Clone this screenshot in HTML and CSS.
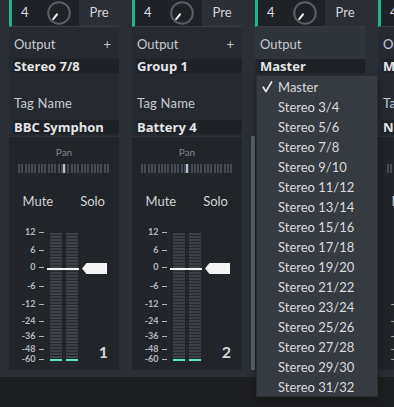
FILE: index.html
```html
<!DOCTYPE html>
<html>
<head>
<meta charset="utf-8">
<link rel="stylesheet" href="styles.css">
</head>
<body>
<div class="app">
  <div class="strips">
    <!-- Strip 1 -->
    <section class="strip">
      <div class="head">
        <div class="head-main"><span class="num">4</span>
          <svg class="knob" viewBox="0 0 24 24"><circle cx="12" cy="12" r="10.8" fill="none" stroke="#5a5e65" stroke-width="2"/><line x1="10" y1="13.3" x2="6.2" y2="18.2" stroke="#f4f4f4" stroke-width="2" stroke-linecap="round"/></svg>
        </div>
        <div class="head-pre"><span>Pre</span></div>
      </div>
      <div class="upper">
        <div class="out-row"><span>Output</span><span class="plus">+</span></div>
        <div class="value">Stereo 7/8</div>
        <div class="tag-row">Tag Name</div>
        <div class="value tag-value">BBC Symphon</div>
      </div>
      <div class="lower">
        <div class="pan-label">Pan</div>
        <div class="pan"></div>
        <div class="ms"><span>Mute</span><span>Solo</span></div>
        <div class="meter">
          <div class="scale">
            <div class="mark" style="top:1px">12</div>
            <div class="mark" style="top:19px">6</div>
            <div class="mark" style="top:36px">0</div>
            <div class="mark" style="top:55px">-6</div>
            <div class="mark" style="top:73px">-12</div>
            <div class="mark" style="top:90px">-24</div>
            <div class="mark" style="top:105px">-36</div>
            <div class="mark" style="top:118px">-48</div>
            <div class="mark" style="top:128px">-60</div>
          </div>
          <div class="bars"><div class="bar"></div><div class="bar"></div></div>
          <div class="chan-no">1</div>
          <div class="fader-line"></div>
          <svg class="fader-cap" viewBox="0 0 25 11"><polygon points="0,5.5 4.5,0 25,0 25,11 4.5,11" fill="#f4f4f4"/></svg>
        </div>
      </div>
    </section>

    <!-- Strip 2 -->
    <section class="strip">
      <div class="head">
        <div class="head-main"><span class="num">4</span>
          <svg class="knob" viewBox="0 0 24 24"><circle cx="12" cy="12" r="10.8" fill="none" stroke="#5a5e65" stroke-width="2"/><line x1="10" y1="13.3" x2="6.2" y2="18.2" stroke="#f4f4f4" stroke-width="2" stroke-linecap="round"/></svg>
        </div>
        <div class="head-pre"><span>Pre</span></div>
      </div>
      <div class="upper">
        <div class="out-row"><span>Output</span><span class="plus">+</span></div>
        <div class="value">Group 1</div>
        <div class="tag-row">Tag Name</div>
        <div class="value tag-value">Battery 4</div>
      </div>
      <div class="lower">
        <div class="pan-label">Pan</div>
        <div class="pan"></div>
        <div class="ms"><span>Mute</span><span>Solo</span></div>
        <div class="meter">
          <div class="scale">
            <div class="mark" style="top:1px">12</div>
            <div class="mark" style="top:19px">6</div>
            <div class="mark" style="top:36px">0</div>
            <div class="mark" style="top:55px">-6</div>
            <div class="mark" style="top:73px">-12</div>
            <div class="mark" style="top:90px">-24</div>
            <div class="mark" style="top:105px">-36</div>
            <div class="mark" style="top:118px">-48</div>
            <div class="mark" style="top:128px">-60</div>
          </div>
          <div class="bars"><div class="bar"></div><div class="bar"></div></div>
          <div class="chan-no">2</div>
          <div class="fader-line"></div>
          <svg class="fader-cap" viewBox="0 0 25 11"><polygon points="0,5.5 4.5,0 25,0 25,11 4.5,11" fill="#f4f4f4"/></svg>
        </div>
      </div>
    </section>

    <!-- Strip 3 (output menu open) -->
    <section class="strip open">
      <div class="head">
        <div class="head-main"><span class="num">4</span>
          <svg class="knob" viewBox="0 0 24 24"><circle cx="12" cy="12" r="10.8" fill="none" stroke="#5a5e65" stroke-width="2"/><line x1="10" y1="13.3" x2="6.2" y2="18.2" stroke="#f4f4f4" stroke-width="2" stroke-linecap="round"/></svg>
        </div>
        <div class="head-pre"><span>Pre</span></div>
      </div>
      <div class="upper">
        <div class="out-row"><span>Output</span></div>
        <div class="value">Master</div>
        <div class="tag-row">Tag Name</div>
        <div class="value tag-value">Kontakt 6</div>
      </div>
      <div class="lower">
        <div class="pan-label">Pan</div>
        <div class="pan"></div>
        <div class="ms"><span>Mute</span><span>Solo</span></div>
        <div class="meter">
          <div class="scale">
            <div class="mark" style="top:1px">12</div>
            <div class="mark" style="top:19px">6</div>
            <div class="mark" style="top:36px">0</div>
            <div class="mark" style="top:55px">-6</div>
            <div class="mark" style="top:73px">-12</div>
            <div class="mark" style="top:90px">-24</div>
            <div class="mark" style="top:105px">-36</div>
            <div class="mark" style="top:118px">-48</div>
            <div class="mark" style="top:128px">-60</div>
          </div>
          <div class="bars"><div class="bar"></div><div class="bar"></div></div>
          <div class="chan-no">3</div>
          <div class="fader-line"></div>
          <svg class="fader-cap" viewBox="0 0 25 11"><polygon points="0,5.5 4.5,0 25,0 25,11 4.5,11" fill="#f4f4f4"/></svg>
        </div>
      </div>
    </section>

    <!-- Strip 4 (partly off-screen) -->
    <section class="strip">
      <div class="head">
        <div class="head-main"><span class="num">4</span>
          <svg class="knob" viewBox="0 0 24 24"><circle cx="12" cy="12" r="10.8" fill="none" stroke="#5a5e65" stroke-width="2"/><line x1="10" y1="13.3" x2="6.2" y2="18.2" stroke="#f4f4f4" stroke-width="2" stroke-linecap="round"/></svg>
        </div>
        <div class="head-pre"><span>Pre</span></div>
      </div>
      <div class="upper">
        <div class="out-row"><span>Output</span><span class="plus">+</span></div>
        <div class="value">Master</div>
        <div class="tag-row">Tag Name</div>
        <div class="value tag-value">Noire</div>
      </div>
      <div class="lower">
        <div class="pan-label">Pan</div>
        <div class="pan"></div>
        <div class="ms"><span>Mute</span><span>Solo</span></div>
        <div class="meter">
          <div class="scale">
            <div class="mark" style="top:1px">12</div>
            <div class="mark" style="top:19px">6</div>
            <div class="mark" style="top:36px">0</div>
            <div class="mark" style="top:55px">-6</div>
            <div class="mark" style="top:73px">-12</div>
            <div class="mark" style="top:90px">-24</div>
            <div class="mark" style="top:105px">-36</div>
            <div class="mark" style="top:118px">-48</div>
            <div class="mark" style="top:128px">-60</div>
          </div>
          <div class="bars"><div class="bar"></div><div class="bar"></div></div>
          <div class="chan-no">4</div>
          <div class="fader-line"></div>
          <svg class="fader-cap" viewBox="0 0 25 11"><polygon points="0,5.5 4.5,0 25,0 25,11 4.5,11" fill="#f4f4f4"/></svg>
        </div>
      </div>
    </section>
  </div>
  <div class="footer"></div>

  <ul class="menu">
    <li class="checked"><svg class="check" viewBox="0 0 20 20"><path d="M6.3 10.2 L8.9 14.6 L14.6 5" fill="none" stroke="#e4e6e9" stroke-width="1.7" stroke-linecap="round" stroke-linejoin="round"/></svg>Master</li>
    <li>Stereo 3/4</li>
    <li>Stereo 5/6</li>
    <li>Stereo 7/8</li>
    <li>Stereo 9/10</li>
    <li>Stereo 11/12</li>
    <li>Stereo 13/14</li>
    <li>Stereo 15/16</li>
    <li>Stereo 17/18</li>
    <li>Stereo 19/20</li>
    <li>Stereo 21/22</li>
    <li>Stereo 23/24</li>
    <li>Stereo 25/26</li>
    <li>Stereo 27/28</li>
    <li>Stereo 29/30</li>
    <li>Stereo 31/32</li>
  </ul>
</div>
</body>
</html>
```

FILE: styles.css
```css
* {
  box-sizing: border-box;
  margin: 0;
  padding: 0;
}

html, body {
  width: 394px;
  height: 407px;
  overflow: hidden;
  background: #2a2e35;
  font-family: Lato, "Liberation Sans", sans-serif;
}

.app {
  position: relative;
  width: 394px;
  height: 407px;
  overflow: hidden;
}

.strips {
  display: flex;
  gap: 13px;
  padding-left: 9px;
  height: 370px;
}

.strip {
  flex: 0 0 110px;
  display: flex;
  flex-direction: column;
}

/* header */
.head {
  display: flex;
  height: 27px;
  border-left: 3px solid #1db58a;
  border-bottom: 1px solid #383c43;
}

.head-main {
  width: 67px;
  background: #1e2126;
  display: flex;
  align-items: center;
  padding-left: 9px;
}

.num {
  font-size: 13px;
  line-height: 14px;
  color: #dcdfe3;
  margin-bottom: 3px;
}

.knob {
  width: 24px;
  height: 24px;
  margin-left: auto;
  margin-right: 8px;
}

.head-pre {
  flex: 1;
  background: #2b2e34;
  display: flex;
  align-items: center;
  justify-content: center;
  font-size: 13px;
  line-height: 14px;
  color: #d3d6da;
}

.head-pre span {
  margin-bottom: 3px;
}

/* upper */
.upper {
  background: #262a30;
  padding-bottom: 2px;
}

.out-row {
  height: 32px;
  padding: 10px 8px 0 5px;
  display: flex;
  justify-content: space-between;
  font-size: 13px;
  line-height: 14px;
  color: #c6cad0;
}

.strip.open .out-row {
  background: #30343b;
}

.plus {
  color: #c3c7cc;
}

.value {
  margin-left: 4px;
  height: 14px;
  padding-left: 1px;
  background: #1e2126;
  font-family: "Open Sans", Lato, sans-serif;
  font-weight: 700;
  font-size: 13px;
  line-height: 14px;
  color: #e3e5e8;
  white-space: nowrap;
}

.tag-row {
  margin-top: 23px;
  padding-left: 5px;
  font-size: 13px;
  line-height: 14px;
  letter-spacing: 0.2px;
  color: #c6cad0;
}

.tag-value {
  margin-top: 10px;
}

/* lower */
.lower {
  flex: 1;
  background: #212429;
  border-top: 1px solid #2f3339;
  padding-top: 9px;
}

.strip.open .lower {
  box-shadow: -4px 0 0 #5a6471;
}

.pan-label {
  font-size: 10px;
  line-height: 12px;
  text-align: center;
  color: #80868e;
}

.pan {
  position: relative;
  margin: 6px 9px 0;
  height: 9px;
  background: repeating-linear-gradient(to right, #464a52 0 2px, transparent 2px 3.3px);
}

.pan::after {
  content: "";
  position: absolute;
  left: 45px;
  top: 0;
  width: 2px;
  height: 9px;
  background: #a7c3df;
}

.ms {
  margin-top: 21px;
  display: flex;
  justify-content: space-between;
  padding: 0 14px 0 13.5px;
  font-size: 13px;
  line-height: 14px;
  color: #d1d4d8;
}

.meter {
  position: relative;
  margin-top: 18px;
  height: 140px;
  display: flex;
}

.scale {
  position: relative;
  width: 35px;
  flex: none;
}

.mark {
  position: absolute;
  right: 0;
  display: flex;
  align-items: center;
  gap: 3.5px;
  height: 10px;
  font-weight: 700;
  font-size: 9px;
  line-height: 10px;
  color: #b4b9c0;
}

.mark::after {
  content: "";
  width: 5px;
  height: 1px;
  background: #b4b9c0;
}

.bars {
  display: flex;
  gap: 4px;
  margin-left: 6px;
  padding-top: 7px;
}

.bar {
  width: 12px;
  height: 129px;
  background:
    linear-gradient(#5fe3c0, #5fe3c0) 0 126px / 100% 2px no-repeat,
    repeating-linear-gradient(to bottom, #3c4047 0 2px, #27292e 2px 3px);
}

.chan-no {
  margin-left: auto;
  align-self: flex-end;
  margin-bottom: 6px;
  padding-right: 11px;
  font-weight: 700;
  font-size: 16px;
  line-height: 16px;
  color: #d3d6da;
}

.fader-line {
  position: absolute;
  left: 38px;
  top: 41.5px;
  width: 32px;
  height: 2px;
  background: #f2f2f2;
}

.fader-cap {
  position: absolute;
  left: 73px;
  top: 36.5px;
  width: 25px;
  height: 11px;
}

.footer {
  margin-top: 7px;
  height: 30px;
  background: #1e1f21;
}

/* dropdown menu */
.menu {
  position: absolute;
  left: 256px;
  top: 75px;
  width: 122px;
  height: 322px;
  background: #363a41;
  border: 1px solid #2a2d32;
  padding-top: 1px;
  list-style: none;
  box-shadow: 0 3px 10px rgba(0, 0, 0, 0.35);
}

.menu li {
  position: relative;
  height: 20px;
  line-height: 20px;
  padding-left: 21px;
  font-size: 13px;
  color: #d9dbde;
  white-space: nowrap;
}

.check {
  position: absolute;
  left: 0;
  top: 0;
  width: 20px;
  height: 20px;
}
```
